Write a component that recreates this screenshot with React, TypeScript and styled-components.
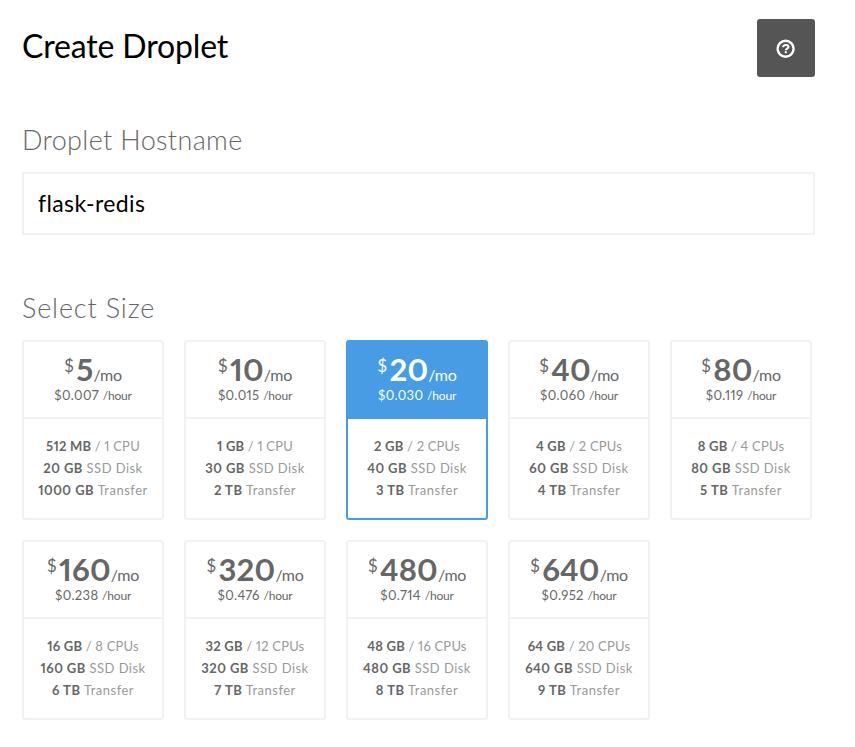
import React from "react";
import styled, { createGlobalStyle } from "styled-components";

const GlobalStyle = createGlobalStyle`
  * { box-sizing: border-box; }
  body {
    margin: 0;
    background: #fff;
    font-family: Lato, "Liberation Sans", sans-serif;
    font-variant-numeric: proportional-nums;
    color: #666;
  }
`;

const Page = styled.main`
  width: 855px;
  height: 747px;
  padding: 19px 40px 0 22px;
`;

const Header = styled.header`
  display: flex;
  justify-content: space-between;
  align-items: flex-start;
  height: 100px;
`;

const Title = styled.h1`
  margin: 8px 0 0;
  font-size: 32px;
  line-height: 38px;
  font-weight: 400;
  letter-spacing: -0.15px;
  color: #000;
`;

const HelpButton = styled.button`
  display: flex;
  align-items: center;
  justify-content: center;
  width: 58px;
  height: 58px;
  padding: 1px 0 0;
  border: 0;
  border-radius: 3px;
  background: #555;
`;

const SectionTitle = styled.h2<{ $tracking: number }>`
  margin: 0;
  height: 53px;
  padding-top: 4px;
  font-size: 27px;
  line-height: 34px;
  font-weight: 300;
  letter-spacing: ${(p) => p.$tracking}px;
  color: #666;
`;

const HostInput = styled.input`
  display: block;
  width: 793px;
  height: 63px;
  margin-bottom: 52px;
  padding: 0 14px 2px;
  border: 2px solid #f1f1f1;
  outline: 0;
  background: #fff;
  font: 400 23px Lato, "Liberation Sans", sans-serif;
  letter-spacing: 0.4px;
  color: #000;
`;

const SizeGrid = styled.div`
  display: grid;
  grid-template-columns: repeat(5, 142px);
  grid-auto-rows: 180px;
  gap: 20px;
`;

const Card = styled.article<{ $selected: boolean }>`
  border: 2px solid ${(p) => (p.$selected ? "#479ce4" : "#f1f1f1")};
  border-radius: 3px;
  text-align: center;
  white-space: nowrap;
`;

const CardHead = styled.div<{ $selected: boolean }>`
  height: 77px;
  padding-top: 9px;
  border-bottom: 2px solid ${(p) => (p.$selected ? "#479ce4" : "#f1f1f1")};
  background: ${(p) => (p.$selected ? "#479ce4" : "#fff")};
  color: ${(p) => (p.$selected ? "#fff" : "#666")};
`;

const Monthly = styled.div`
  display: flex;
  justify-content: center;
  align-items: baseline;
  height: 35px;
  line-height: 36px;
`;

const Currency = styled.span`
  width: 12px;
  font-size: 17px;
  transform: translateY(-9px);
  text-align: left;
`;

const Amount = styled.strong`
  font-size: 31px;
  font-weight: 700;
  letter-spacing: 0.2px;
`;

const Period = styled.span`
  font-size: 16px;
  letter-spacing: -0.3px;
`;

const Hourly = styled.div`
  font-size: 13px;
  line-height: 18px;
  letter-spacing: 0.35px;
`;

const HourUnit = styled.span`
  font-size: 12px;
  letter-spacing: -0.2px;
`;

const Specs = styled.ul`
  margin: 0;
  padding: 16px 0 0;
  list-style: none;
  font-size: 13px;
  line-height: 22px;
  color: #999;
`;

const Spec = styled.li<{ $tracking: number }>`
  letter-spacing: ${(p) => p.$tracking}px;
`;

const Value = styled.b`
  font-weight: 700;
  color: #666;
`;

type Size = [string, string, string, string, string, string];

const sizes: Size[] = [
  ["5", "0.007", "512 MB", "1 CPU", "20 GB", "1000 GB"],
  ["10", "0.015", "1 GB", "1 CPU", "30 GB", "2 TB"],
  ["20", "0.030", "2 GB", "2 CPUs", "40 GB", "3 TB"],
  ["40", "0.060", "4 GB", "2 CPUs", "60 GB", "4 TB"],
  ["80", "0.119", "8 GB", "4 CPUs", "80 GB", "5 TB"],
  ["160", "0.238", "16 GB", "8 CPUs", "160 GB", "6 TB"],
  ["320", "0.476", "32 GB", "12 CPUs", "320 GB", "7 TB"],
  ["480", "0.714", "48 GB", "16 CPUs", "480 GB", "8 TB"],
  ["640", "0.952", "64 GB", "20 CPUs", "640 GB", "9 TB"],
];

function HelpIcon() {
  return (
    <svg width="20" height="20" viewBox="0 0 20 20" fill="none" stroke="#fff">
      <circle cx="9.6" cy="9.8" r="8" strokeWidth="2.4" />
      <path d="M7 8.1C7.3 6.7 8.4 6.1 9.8 6.1C11.4 6.1 12.5 6.9 12.5 8.1C12.5 9.7 9.8 9.5 9.8 11.3" strokeWidth="2" />
      <path d="M9.8 12.2V14.2" strokeWidth="2.1" />
    </svg>
  );
}

export default function App() {
  return (
    <>
      <GlobalStyle />
      <Page>
        <Header>
          <Title>Create Droplet</Title>
          <HelpButton aria-label="Help">
            <HelpIcon />
          </HelpButton>
        </Header>
        <SectionTitle $tracking={0.35}>Droplet Hostname</SectionTitle>
        <HostInput defaultValue="flask-redis" aria-label="Droplet Hostname" />
        <SectionTitle $tracking={0.85}>Select Size</SectionTitle>
        <SizeGrid>
          {sizes.map(([price, hourly, memory, cpus, disk, transfer]) => {
            const selected = price === "20";
            return (
              <Card key={price} $selected={selected}>
                <CardHead $selected={selected}>
                  <Monthly>
                    <Currency>$</Currency>
                    <Amount>{price}</Amount>
                    <Period>/mo</Period>
                  </Monthly>
                  <Hourly>
                    ${hourly} <HourUnit>/hour</HourUnit>
                  </Hourly>
                </CardHead>
                <Specs>
                  <Spec $tracking={0.2}><Value>{memory}</Value> / {cpus}</Spec>
                  <Spec $tracking={0.45}><Value>{disk}</Value> SSD Disk</Spec>
                  <Spec $tracking={0.5}><Value>{transfer}</Value> Transfer</Spec>
                </Specs>
              </Card>
            );
          })}
        </SizeGrid>
      </Page>
    </>
  );
}
